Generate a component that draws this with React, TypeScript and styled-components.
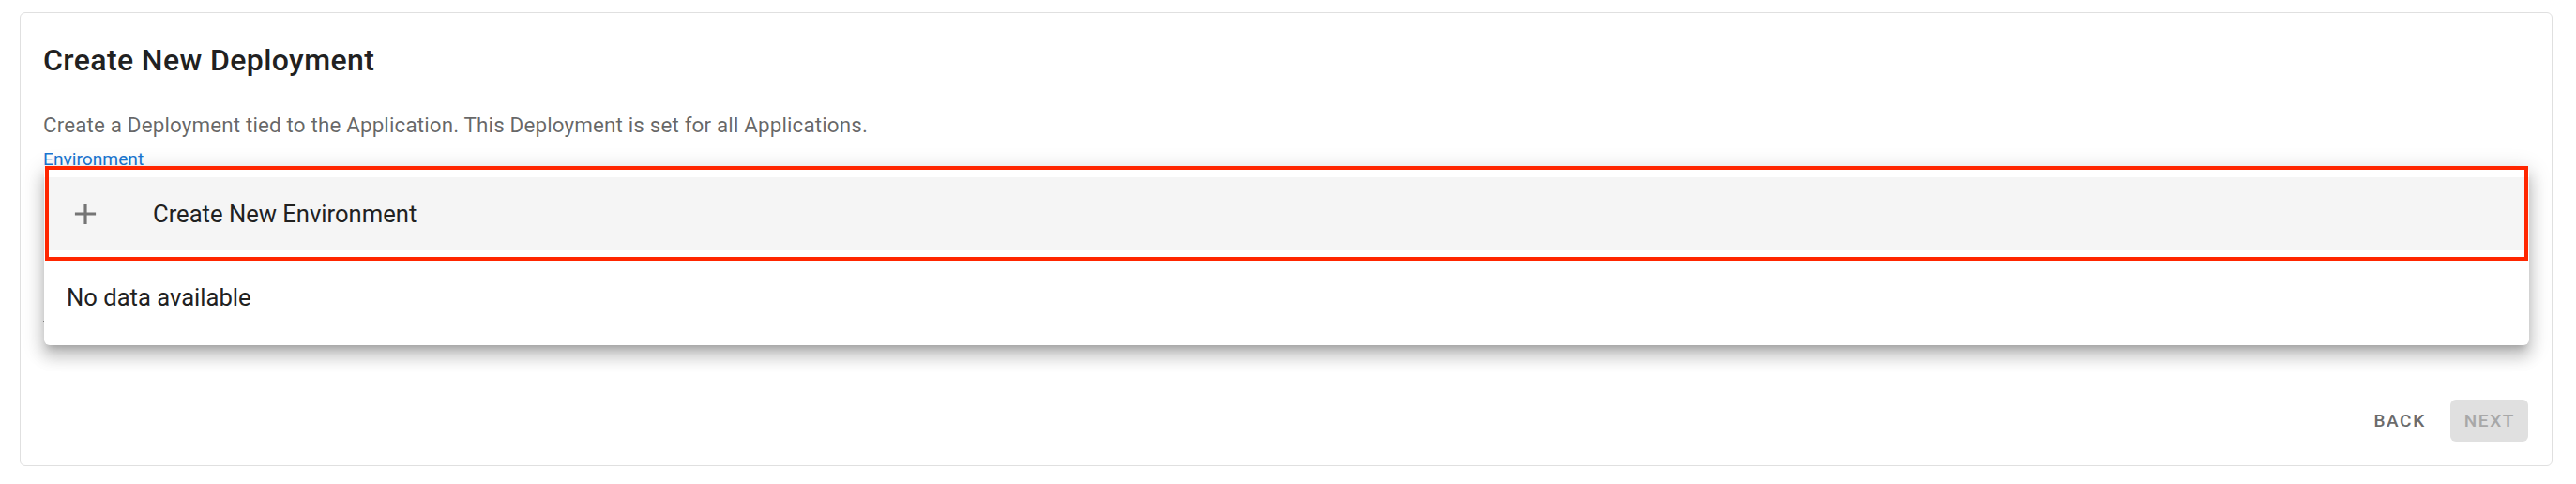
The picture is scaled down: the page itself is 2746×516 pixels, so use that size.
import React from "react";
import styled, { createGlobalStyle } from "styled-components";

const GlobalStyle = createGlobalStyle`
  html, body {
    margin: 0;
    padding: 0;
    background: #fff;
    font-family: Roboto, "Liberation Sans", sans-serif;
    -webkit-font-smoothing: antialiased;
  }
`;

const Page = styled.div`
  padding: 13px 25px 19px 21px;
`;

const Card = styled.section`
  border: 1px solid #e0e0e0;
  border-radius: 6px;
  padding: 26px 25px 25px 24px;
  background: #fff;
`;

const Title = styled.h2`
  margin: 0;
  font-size: 32px;
  line-height: 48px;
  font-weight: 500;
  letter-spacing: 0.0125em;
  color: #212121;
`;

const Description = styled.p`
  margin: 30px 0 0;
  font-size: 22.4px;
  line-height: 30px;
  letter-spacing: 0.15px;
  color: rgba(0, 0, 0, 0.6);
`;

const FieldWrap = styled.div`
  position: relative;
  margin-top: 8px;
`;

const FieldLabel = styled.label`
  display: block;
  font-size: 19.2px;
  line-height: 27px;
  color: #1976d2;
`;

const FieldInput = styled.div`
  height: 159px;
  border-bottom: 1.5px solid rgba(0, 0, 0, 0.42);
`;

const Menu = styled.div`
  position: absolute;
  top: 21px;
  left: 1px;
  right: -1px;
  background: #fff;
  border-radius: 6px;
  padding-top: 12px;
  box-shadow: 0 7px 8px -4px rgba(0, 0, 0, 0.2),
    0 12px 16px 2px rgba(0, 0, 0, 0.14), 0 5px 22px 4px rgba(0, 0, 0, 0.12);
  z-index: 5;
`;

const ListItem = styled.div<{ $active?: boolean; $height: number }>`
  display: flex;
  align-items: center;
  height: ${(p) => p.$height}px;
  padding: 0 24px;
  background: ${(p) => (p.$active ? "#f5f5f5" : "transparent")};
  font-size: 25.6px;
  color: #212121;
`;

const ItemIcon = styled.span`
  display: inline-flex;
  width: 38px;
  height: 38px;
  margin-left: 1px;
  margin-right: 53px;
  color: #757575;
`;

const Highlight = styled.div`
  position: absolute;
  top: 0;
  left: 1px;
  right: 1px;
  height: 101px;
  box-sizing: border-box;
  border: 4px solid #ff2600;
  pointer-events: none;
`;

const Actions = styled.div`
  display: flex;
  justify-content: flex-end;
  gap: 12px;
  margin-top: 83px;
`;

const Button = styled.button<{ $disabled?: boolean }>`
  height: 45px;
  padding: 0 14px 0 15px;
  border: none;
  border-radius: 6px;
  font-family: Roboto, "Liberation Sans", sans-serif;
  font-size: 19px;
  font-weight: 500;
  letter-spacing: 0.085em;
  text-transform: uppercase;
  background: ${(p) => (p.$disabled ? "#e0e0e0" : "transparent")};
  color: ${(p) => (p.$disabled ? "#a8a8a8" : "#6b6b6b")};
  cursor: ${(p) => (p.$disabled ? "default" : "pointer")};
`;

const PlusIcon = () => (
  <svg viewBox="0 0 24 24" width="38" height="38" fill="currentColor">
    <path d="M19,13H13V19H11V13H5V11H11V5H13V11H19V13Z" />
  </svg>
);

export default function App() {
  return (
    <Page>
      <GlobalStyle />
      <Card>
        <Title>Create New Deployment</Title>
        <Description>
          Create a Deployment tied to the Application. This Deployment is set
          for all Applications.
        </Description>
        <FieldWrap>
          <FieldLabel>Environment</FieldLabel>
          <FieldInput />
          <Menu>
            <ListItem $active $height={77}>
              <ItemIcon>
                <PlusIcon />
              </ItemIcon>
              Create New Environment
            </ListItem>
            <ListItem $height={102}>No data available</ListItem>
            <Highlight />
          </Menu>
        </FieldWrap>
        <Actions>
          <Button>Back</Button>
          <Button $disabled disabled>
            Next
          </Button>
        </Actions>
      </Card>
    </Page>
  );
}
